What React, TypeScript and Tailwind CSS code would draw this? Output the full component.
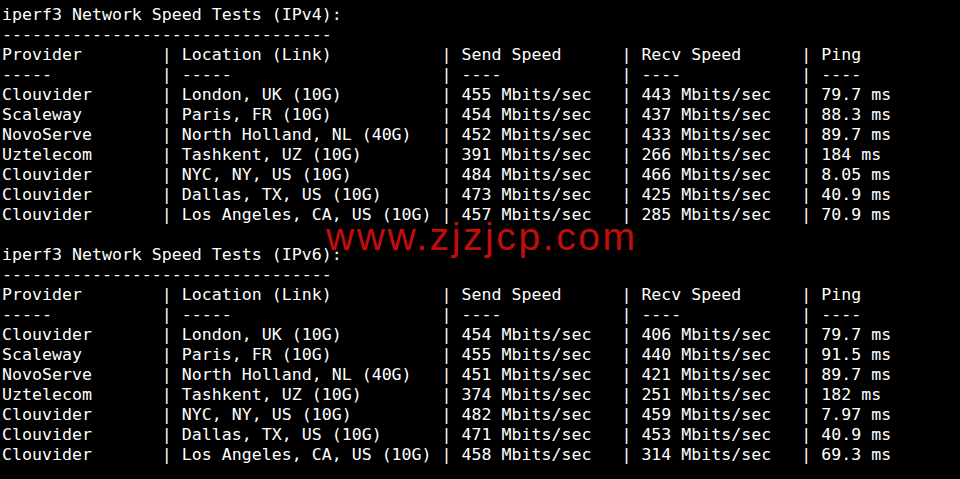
import React from "react";

type Row = [string, string, string, string, string];

const v4: Row[] = [
  ["Clouvider", "London, UK (10G)", "455 Mbits/sec", "443 Mbits/sec", "79.7 ms"],
  ["Scaleway", "Paris, FR (10G)", "454 Mbits/sec", "437 Mbits/sec", "88.3 ms"],
  ["NovoServe", "North Holland, NL (40G)", "452 Mbits/sec", "433 Mbits/sec", "89.7 ms"],
  ["Uztelecom", "Tashkent, UZ (10G)", "391 Mbits/sec", "266 Mbits/sec", "184 ms"],
  ["Clouvider", "NYC, NY, US (10G)", "484 Mbits/sec", "466 Mbits/sec", "8.05 ms"],
  ["Clouvider", "Dallas, TX, US (10G)", "473 Mbits/sec", "425 Mbits/sec", "40.9 ms"],
  ["Clouvider", "Los Angeles, CA, US (10G)", "457 Mbits/sec", "285 Mbits/sec", "70.9 ms"],
];

const v6: Row[] = [
  ["Clouvider", "London, UK (10G)", "454 Mbits/sec", "406 Mbits/sec", "79.7 ms"],
  ["Scaleway", "Paris, FR (10G)", "455 Mbits/sec", "440 Mbits/sec", "91.5 ms"],
  ["NovoServe", "North Holland, NL (40G)", "451 Mbits/sec", "421 Mbits/sec", "89.7 ms"],
  ["Uztelecom", "Tashkent, UZ (10G)", "374 Mbits/sec", "251 Mbits/sec", "182 ms"],
  ["Clouvider", "NYC, NY, US (10G)", "482 Mbits/sec", "459 Mbits/sec", "7.97 ms"],
  ["Clouvider", "Dallas, TX, US (10G)", "471 Mbits/sec", "453 Mbits/sec", "40.9 ms"],
  ["Clouvider", "Los Angeles, CA, US (10G)", "458 Mbits/sec", "314 Mbits/sec", "69.3 ms"],
];

const fmt = (r: Row) =>
  r[0].padEnd(15) + " | " + r[1].padEnd(25) + " | " + r[2].padEnd(15) + " | " + r[3].padEnd(15) + " | " + r[4];

const section = (title: string, rows: Row[]) => [
  title,
  "---------------------------------",
  fmt(["Provider", "Location (Link)", "Send Speed", "Recv Speed", "Ping"]),
  fmt(["-----", "-----", "----", "----", "----"]),
  ...rows.map(fmt),
];

const lines = [
  ...section("iperf3 Network Speed Tests (IPv4):", v4),
  "",
  ...section("iperf3 Network Speed Tests (IPv6):", v6),
];

export default function App() {
  return (
    <div className="relative w-[960px] h-[479px] bg-black overflow-hidden">
      <pre
        className="pt-[5px] pl-[2px] m-0 text-white text-[16.6px] leading-[20px] whitespace-pre"
        style={{ fontFamily: '"DejaVu Sans Mono", monospace' }}
      >
        {lines.map((l, i) => (
          <div key={i} className="h-[20px]">
            {l || " "}
          </div>
        ))}
      </pre>
      <div
        className="absolute left-[326px] top-[217px] text-[39px] leading-[39px] tracking-[2.6px] text-[#c30d0d] whitespace-nowrap"
        style={{ fontFamily: '"Liberation Sans", Arial, sans-serif' }}
      >
        www.zjzjcp.com
      </div>
    </div>
  );
}
